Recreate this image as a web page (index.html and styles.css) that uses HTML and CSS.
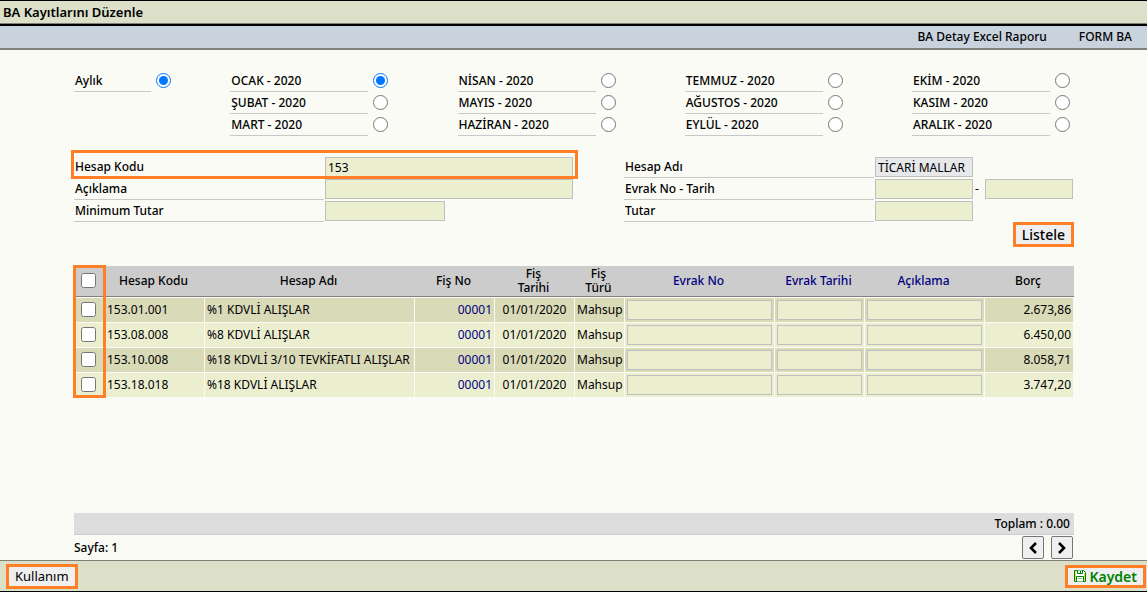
FILE: index.html
```html
<!DOCTYPE html>
<html lang="tr">
<head>
  <meta charset="UTF-8">
  <meta name="viewport" content="width=device-width, initial-scale=1.0">
  <title>BA Kayıtlarını Düzenle</title>
  <link rel="stylesheet" href="styles.css">
</head>
<body>
  <h1 class="title">BA Kayıtlarını Düzenle</h1>
  <nav class="menu">
    <a href="#">BA Detay Excel Raporu</a>
    <a href="#">FORM BA</a>
  </nav>

  <main class="content">
    <div class="periods">
      <div class="period-group period-type">
        <div class="period"><label for="aylik">Aylık</label><input type="radio" id="aylik" name="type" checked></div>
      </div>
      <div class="period-group">
        <div class="period"><label for="m1">OCAK - 2020</label><input type="radio" id="m1" name="month" checked></div>
        <div class="period"><label for="m2">ŞUBAT - 2020</label><input type="radio" id="m2" name="month"></div>
        <div class="period"><label for="m3">MART - 2020</label><input type="radio" id="m3" name="month"></div>
      </div>
      <div class="period-group">
        <div class="period"><label for="m4">NİSAN - 2020</label><input type="radio" id="m4" name="month"></div>
        <div class="period"><label for="m5">MAYIS - 2020</label><input type="radio" id="m5" name="month"></div>
        <div class="period"><label for="m6">HAZİRAN - 2020</label><input type="radio" id="m6" name="month"></div>
      </div>
      <div class="period-group">
        <div class="period"><label for="m7">TEMMUZ - 2020</label><input type="radio" id="m7" name="month"></div>
        <div class="period"><label for="m8">AĞUSTOS - 2020</label><input type="radio" id="m8" name="month"></div>
        <div class="period"><label for="m9">EYLÜL - 2020</label><input type="radio" id="m9" name="month"></div>
      </div>
      <div class="period-group">
        <div class="period"><label for="m10">EKİM - 2020</label><input type="radio" id="m10" name="month"></div>
        <div class="period"><label for="m11">KASIM - 2020</label><input type="radio" id="m11" name="month"></div>
        <div class="period"><label for="m12">ARALIK - 2020</label><input type="radio" id="m12" name="month"></div>
      </div>
    </div>

    <form class="filters">
      <div class="filter-col">
        <div class="field marked"><label for="hesapKodu">Hesap Kodu</label><input type="text" class="wide" id="hesapKodu" value="153"></div>
        <div class="field"><label for="aciklama">Açıklama</label><input type="text" class="wide" id="aciklama"></div>
        <div class="field"><label for="minTutar">Minimum Tutar</label><input type="text" class="medium" id="minTutar"></div>
      </div>
      <div class="filter-col">
        <div class="field"><label for="hesapAdi">Hesap Adı</label><input type="text" id="hesapAdi" value="TİCARİ MALLAR" readonly></div>
        <div class="field"><label for="evrakNo">Evrak No - Tarih</label><input type="text" id="evrakNo"><span class="dash">-</span><input type="text" class="date" aria-label="Tarih"></div>
        <div class="field"><label for="tutar">Tutar</label><input type="text" id="tutar"></div>
      </div>
      <button type="button" class="btn btn-list">Listele</button>
    </form>

    <div class="list">
      <table>
        <colgroup>
          <col class="c-check"><col class="c-code"><col class="c-name"><col class="c-no"><col class="c-date">
          <col class="c-kind"><col class="c-doc"><col class="c-docdate"><col class="c-desc"><col class="c-debt">
        </colgroup>
        <thead>
          <tr>
            <th class="check"><input type="checkbox" aria-label="Tümü"></th>
            <th>Hesap Kodu</th>
            <th>Hesap Adı</th>
            <th>Fiş No</th>
            <th>Fiş<br>Tarihi</th>
            <th>Fiş<br>Türü</th>
            <th><a href="#">Evrak No</a></th>
            <th><a href="#">Evrak Tarihi</a></th>
            <th><a href="#">Açıklama</a></th>
            <th>Borç</th>
          </tr>
        </thead>
        <tbody>
          <tr>
            <td class="check"><input type="checkbox" aria-label="153.01.001"></td>
            <td>153.01.001</td>
            <td>%1 KDVLİ ALIŞLAR</td>
            <td class="num"><a href="#">00001</a></td>
            <td class="mid">01/01/2020</td>
            <td class="mid">Mahsup</td>
            <td><input type="text" aria-label="Evrak No"></td>
            <td><input type="text" aria-label="Evrak Tarihi"></td>
            <td><input type="text" aria-label="Açıklama"></td>
            <td class="num">2.673,86</td>
          </tr>
          <tr>
            <td class="check"><input type="checkbox" aria-label="153.08.008"></td>
            <td>153.08.008</td>
            <td>%8 KDVLİ ALIŞLAR</td>
            <td class="num"><a href="#">00001</a></td>
            <td class="mid">01/01/2020</td>
            <td class="mid">Mahsup</td>
            <td><input type="text" aria-label="Evrak No"></td>
            <td><input type="text" aria-label="Evrak Tarihi"></td>
            <td><input type="text" aria-label="Açıklama"></td>
            <td class="num">6.450,00</td>
          </tr>
          <tr>
            <td class="check"><input type="checkbox" aria-label="153.10.008"></td>
            <td>153.10.008</td>
            <td>%18 KDVLİ 3/10 TEVKİFATLI ALIŞLAR</td>
            <td class="num"><a href="#">00001</a></td>
            <td class="mid">01/01/2020</td>
            <td class="mid">Mahsup</td>
            <td><input type="text" aria-label="Evrak No"></td>
            <td><input type="text" aria-label="Evrak Tarihi"></td>
            <td><input type="text" aria-label="Açıklama"></td>
            <td class="num">8.058,71</td>
          </tr>
          <tr>
            <td class="check"><input type="checkbox" aria-label="153.18.018"></td>
            <td>153.18.018</td>
            <td>%18 KDVLİ ALIŞLAR</td>
            <td class="num"><a href="#">00001</a></td>
            <td class="mid">01/01/2020</td>
            <td class="mid">Mahsup</td>
            <td><input type="text" aria-label="Evrak No"></td>
            <td><input type="text" aria-label="Evrak Tarihi"></td>
            <td><input type="text" aria-label="Açıklama"></td>
            <td class="num">3.747,20</td>
          </tr>
        </tbody>
      </table>
    </div>

    <div class="total">Toplam : 0.00</div>
    <div class="pager">
      <span>Sayfa: 1</span>
      <div class="pager-buttons">
        <button type="button" aria-label="Önceki"><svg width="10" height="12" viewBox="0 0 10 12"><path d="M8 1L3 6l5 5" fill="none" stroke="#000" stroke-width="2.6"/></svg></button>
        <button type="button" aria-label="Sonraki"><svg width="10" height="12" viewBox="0 0 10 12"><path d="M2 1l5 5-5 5" fill="none" stroke="#000" stroke-width="2.6"/></svg></button>
      </div>
    </div>
  </main>

  <footer class="footer">
    <button type="button" class="btn btn-help">Kullanım</button>
    <button type="button" class="btn btn-save">
      <svg width="12" height="12" viewBox="0 0 12 12">
        <path d="M.5.5h9l2 2v9H.5z" fill="#fff" stroke="#008000"/>
        <path d="M1.500 1.500v9M10.500 3v7.500" stroke="#d9d95a"/>
        <path d="M3.500.5v3h5v-3" fill="#fff" stroke="#008000"/>
        <path d="M6.500 1v2" stroke="#008000"/>
        <path d="M2.500 11.500v-5h7v5" fill="#fff" stroke="#008000"/>
        <path d="M4 8.500h4" stroke="#8a8"/>
      </svg>
      Kaydet
    </button>
  </footer>
</body>
</html>
```

FILE: styles.css
```css
*,
*::after {
  box-sizing: border-box;
}
body {
  display: flex;
  flex-direction: column;
  min-height: 100vh;
  margin: 0;
  font-family: "Noto Sans", "Open Sans", sans-serif;
  font-size: 12px;
  line-height: 16px;
  color: #000;
  background-color: #fafbf5;
}
a {
  color: #000080;
  text-decoration: none;
}
input {
  margin: 0;
}
input[type="text"] {
  width: 98px;
  height: 20px;
  padding: 1px 2px;
  border: 1px solid #bfbfbf;
  background-color: #ebefd0;
  font-family: inherit;
  font-size: 12px;
  color: #000;
}
input[type="text"][readonly] {
  background-color: #e6e8ea;
}
input[type="radio"],
input[type="checkbox"] {
  flex: none;
  width: 15px;
  height: 15px;
}

/* header */
.title {
  height: 26px;
  margin: 0;
  padding-left: 3px;
  border-top: 1px solid #000;
  border-bottom: 2px solid #000;
  background-color: #dde0c8;
  box-shadow: inset 0 -1px #808078;
  font-size: 13px;
  font-weight: 600;
  line-height: 22px;
}
.menu {
  display: flex;
  justify-content: flex-end;
  gap: 32px;
  padding: 0 15px 0 0;
  border-bottom: 2px solid #80827c;
  background-color: #c9d3dd;
  font-weight: 500;
  line-height: 22px;
}
.menu a {
  color: #000;
}

.content {
  display: flex;
  flex: 1;
  flex-direction: column;
  padding: 20px 73px 0 74px;
}

/* period selection */
.periods {
  display: flex;
  justify-content: space-between;
}
.period-group {
  width: 162px;
}
.period-type {
  width: 97px;
  margin-right: -6px;
}
.period {
  display: flex;
  gap: 5px;
}
.period label {
  width: 138px;
  height: 22px;
  padding-left: 1px;
  border-bottom: 1px solid #c8c8c8;
  font-weight: 500;
  line-height: 21px;
}
.period-type label {
  width: 77px;
}
.period input {
  margin-top: 3px;
}

/* filters */
.filters {
  display: grid;
  grid-template-columns: 55fr 45fr;
  margin-top: 20px;
}
.field {
  display: flex;
  align-items: center;
  position: relative;
}
.field label {
  width: 250px;
  height: 22px;
  margin-right: 1px;
  padding-left: 1px;
  border-bottom: 1px solid #c8c8c8;
  font-weight: 500;
  line-height: 21px;
}
.field .wide {
  width: 248px;
}
.field .medium {
  width: 120px;
}
.field .date {
  width: 88px;
}
.dash {
  width: 12px;
  padding-left: 2px;
}
.marked::after {
  content: "";
  position: absolute;
  top: -6px;
  left: -3px;
  width: 507px;
  height: 29px;
  border: 3px solid #ff7f27;
  pointer-events: none;
}

.btn {
  border: 3px solid #ff7f27;
  background-color: #efefef;
  font-family: inherit;
  font-size: 13px;
  line-height: 19px;
  padding: 0 6px;
  cursor: pointer;
}
.btn-list {
  grid-column: 2;
  justify-self: end;
  font-size: 14px;
  font-weight: 500;
}

/* list */
.list {
  position: relative;
  margin-top: 19px;
}
.list::after {
  content: "";
  position: absolute;
  top: -1px;
  bottom: -1px;
  left: -1px;
  width: 33px;
  border: 3px solid #ff7f27;
  pointer-events: none;
}
table {
  width: 100%;
  table-layout: fixed;
  border-collapse: separate;
  border-spacing: 0;
}
.c-check { width: 31px; }
.c-code { width: 100px; }
.c-name { width: auto; }
.c-no { width: 80px; }
.c-date { width: 80px; }
.c-kind { width: 50px; }
.c-doc { width: 150px; }
.c-docdate { width: 90px; }
.c-desc { width: 120px; }
.c-debt { width: 89px; }
th {
  height: 31px;
  padding: 0 3px 0 0;
  border-bottom: 1px solid #808080;
  background-color: #ccc;
  font-weight: 500;
  line-height: 14px;
}
td {
  height: 25px;
  padding: 0 2px;
  border-top: 1px solid #fafbf5;
  border-right: 1px solid #fafbf5;
  background-color: #d9dab8;
  font-size: 12px;
  line-height: 16px;
  white-space: nowrap;
}
tr:nth-child(even) td {
  background-color: #ebefd0;
}
.check {
  padding: 0 2px 1px 0;
  border-right: 0;
}
.check input {
  display: block;
  margin: 0 auto;
}
td input[type="text"] {
  display: block;
  width: 100%;
}
.num {
  text-align: right;
}
.mid {
  text-align: center;
}

.total {
  margin-top: auto;
  height: 22px;
  padding-right: 4px;
  border-bottom: 1px solid #ccc;
  background-color: #ddd;
  font-weight: 500;
  line-height: 21px;
  text-align: right;
}
.pager {
  display: flex;
  justify-content: space-between;
  align-items: center;
  height: 25px;
  font-weight: 500;
}
.pager-buttons {
  display: flex;
  gap: 7px;
  padding-right: 1px;
}
.pager-buttons button {
  display: flex;
  align-items: center;
  justify-content: center;
  width: 22px;
  height: 23px;
  padding: 0;
  border: 1px solid #767676;
  border-radius: 2px;
  background-color: #efefef;
}

.footer {
  display: flex;
  justify-content: space-between;
  align-items: center;
  height: 32px;
  padding: 0 1px 0 6px;
  border-top: 1px solid #808078;
  border-bottom: 1px solid #000;
  background-color: #dde0c8;
}
.btn-save {
  display: flex;
  align-items: center;
  gap: 3px;
  font-size: 14px;
  font-weight: 600;
  line-height: 17px;
  color: #008000;
}
```
